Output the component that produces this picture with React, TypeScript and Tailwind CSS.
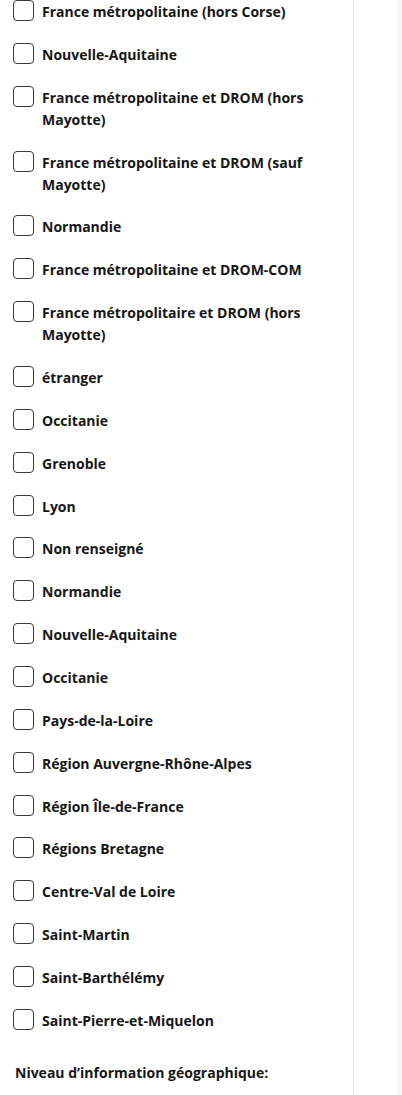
const regions = [
  "France métropolitaine (hors Corse)",
  "Nouvelle-Aquitaine",
  "France métropolitaine et DROM (hors Mayotte)",
  "France métropolitaine et DROM (sauf Mayotte)",
  "Normandie",
  "France métropolitaine et DROM-COM",
  "France métropolitaire et DROM (hors Mayotte)",
  "étranger",
  "Occitanie",
  "Grenoble",
  "Lyon",
  "Non renseigné",
  "Normandie",
  "Nouvelle-Aquitaine",
  "Occitanie",
  "Pays-de-la-Loire",
  "Région Auvergne-Rhône-Alpes",
  "Région Île-de-France",
  "Régions Bretagne",
  "Centre-Val de Loire",
  "Saint-Martin",
  "Saint-Barthélémy",
  "Saint-Pierre-et-Miquelon",
];

function Checkbox({ label }: { label: string }) {
  return (
    <label className="flex items-start gap-2 cursor-pointer">
      <span className="mt-[-1px] w-[21px] h-[21px] shrink-0 rounded-[4px] border border-[#3a3a3a] bg-white" />
      <span className="text-[14px] leading-[22px] font-bold text-[#161616] pr-2">{label}</span>
    </label>
  );
}

export default function App() {
  return (
    <div
      className="flex h-[1095px] w-[402px] overflow-hidden bg-white"
      style={{ fontFamily: '"Open Sans", "Noto Sans", sans-serif' }}
    >
      <aside className="w-[354px] shrink-0 border-r border-[#e5e5e5] pl-[13px] pr-4 pt-px">
        <div className="flex flex-col gap-[20.86px] w-[300px]">
          {regions.map((r, i) => (
            <Checkbox key={i} label={r} />
          ))}
        </div>
        <p className="mt-[30px] pl-[2px] text-[14px] leading-[22px] font-bold text-[#161616]">
          Niveau d’information géographique:
        </p>
      </aside>
      <div className="flex-1" />
      <div className="w-[5px] bg-[#f6f6f6]" />
    </div>
  );
}
